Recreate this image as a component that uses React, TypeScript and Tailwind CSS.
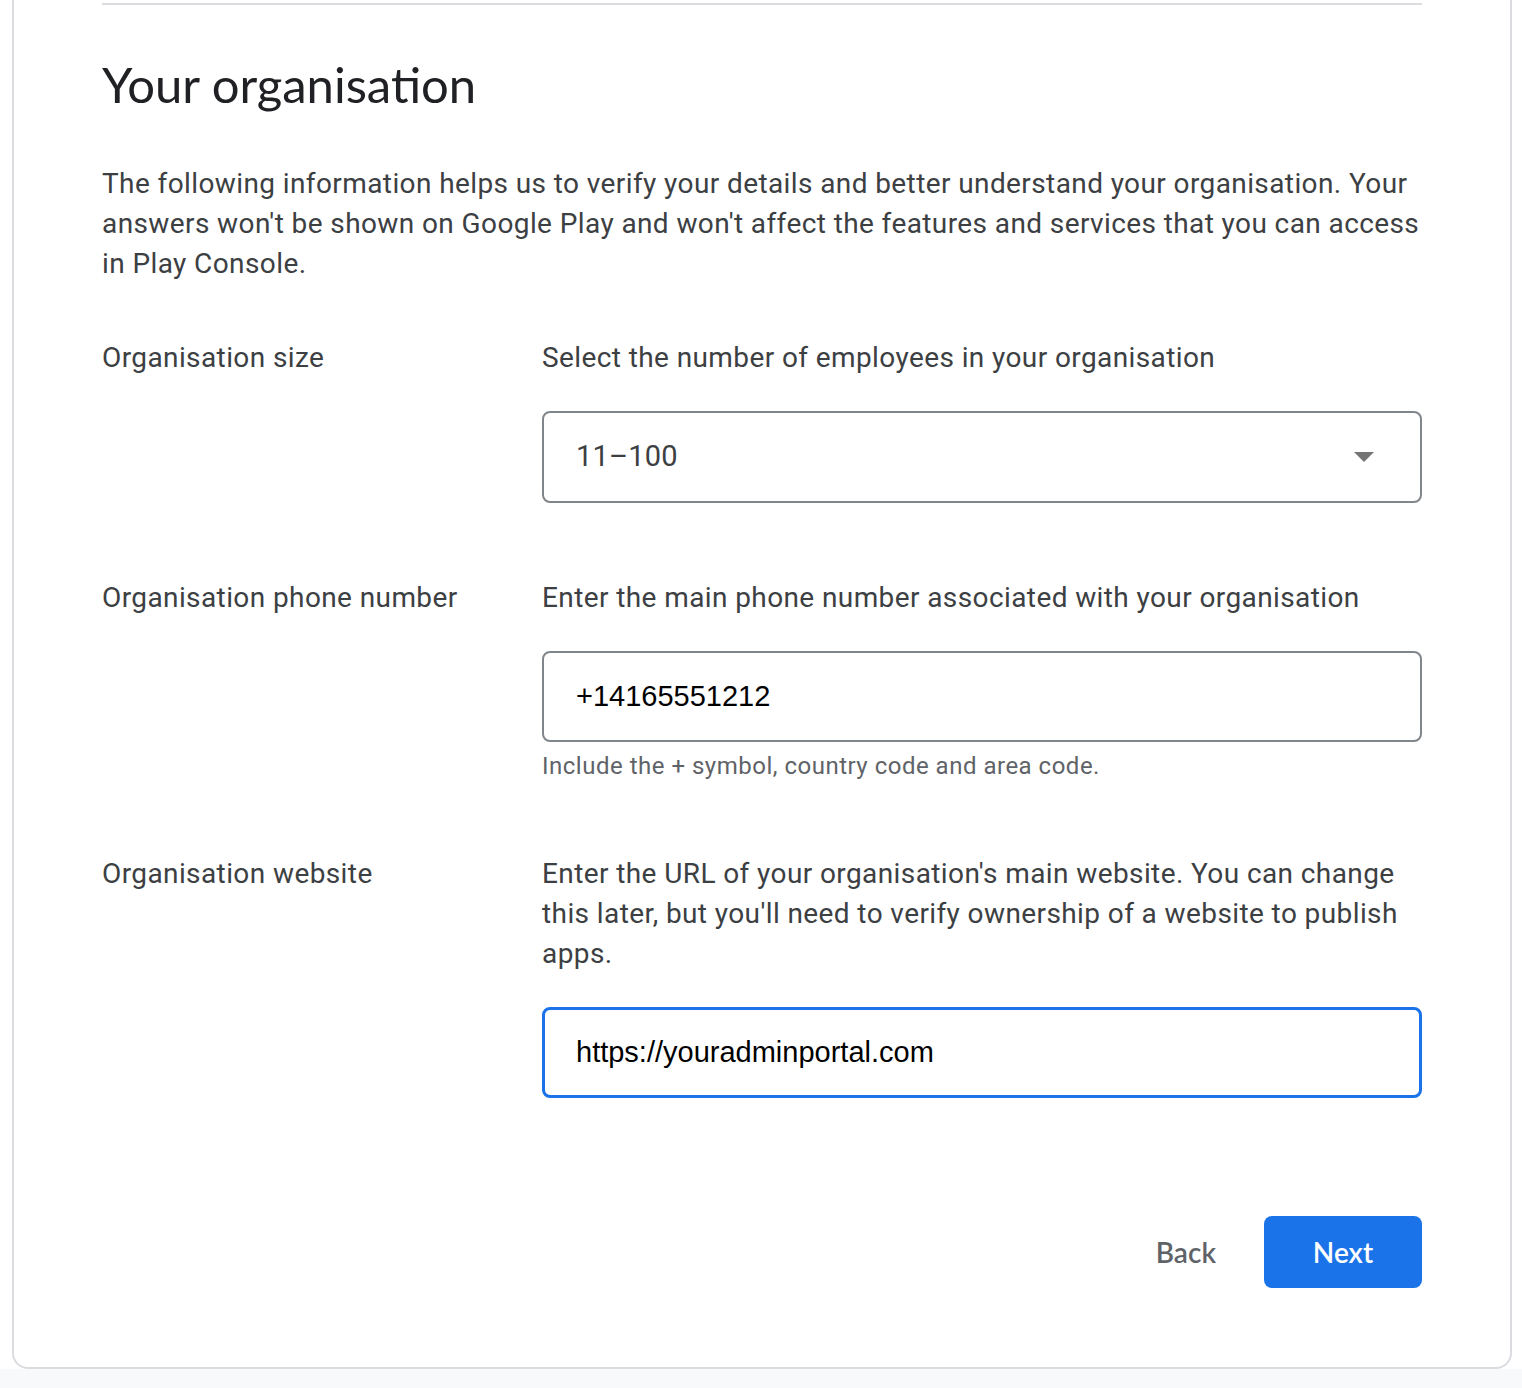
import React from 'react'

const heading = { fontFamily: 'Lato, "Open Sans", sans-serif' }

function Row({ label, children, className = '' }: { label: string; children: React.ReactNode; className?: string }) {
  return (
    <div className={`grid grid-cols-[440px_1fr] ${className}`}>
      <div className="text-[28px] leading-[40px] tracking-[0.4px] text-[#3c4043]">{label}</div>
      <div>{children}</div>
    </div>
  )
}

export default function App() {
  return (
    <div className="min-h-screen bg-white" style={{ fontFamily: 'Roboto, "Liberation Sans", sans-serif' }}>
      <div className="ml-[12px] mr-[10px] border-x-2 border-b-2 border-[#dadce0] rounded-b-[16px] bg-white px-[88px] pt-[3px] pb-[79px]">
        {/* divider from the section above */}
        <div className="h-[2px] bg-[#dadce0]" />

        <h1 className="mt-[51px] text-[49px] leading-[56px] text-[#202124]" style={heading}>
          Your organisation
        </h1>

        <p className="mt-[52px] text-[28px] leading-[40px] tracking-[0.4px] text-[#3c4043]">
          The following information helps us to verify your details and better understand your organisation. Your
          answers won't be shown on Google Play and won't affect the features and services that you can access
          in Play Console.
        </p>

        <Row label="Organisation size" className="mt-[54px]">
          <div className="text-[28px] leading-[40px] tracking-[0.4px] text-[#3c4043]">
            Select the number of employees in your organisation
          </div>
          <div className="mt-[33px] flex h-[92px] items-center justify-between rounded-[8px] border-2 border-[#80868b] pl-[32px] pr-[46px]">
            <span className="text-[29px] tracking-[0.2px] text-[#3c4043]">11–100</span>
            <svg width="20" height="10" viewBox="0 0 20 10">
              <path d="M0 0h20L10 10z" fill="#757575" />
            </svg>
          </div>
        </Row>

        <Row label="Organisation phone number" className="mt-[75px]">
          <div className="text-[28px] leading-[40px] tracking-[0.4px] text-[#3c4043]">
            Enter the main phone number associated with your organisation
          </div>
          <div className="mt-[33px] flex h-[91px] items-center rounded-[8px] border-2 border-[#80868b] pl-[32px]">
            <span className="text-[29px] text-black" style={{ fontFamily: '"Liberation Sans", Arial, sans-serif' }}>
              +14165551212
            </span>
          </div>
          <div className="mt-[8px] text-[24px] leading-[32px] tracking-[0.5px] text-[#5f6368]">
            Include the + symbol, country code and area code.
          </div>
        </Row>

        <Row label="Organisation website" className="mt-[72px]">
          <div className="text-[28px] leading-[40px] tracking-[0.4px] text-[#3c4043]">
            Enter the URL of your organisation's main website. You can change this later, but you'll need to verify
            ownership of a website to publish apps.
          </div>
          <div className="mt-[33px] flex h-[91px] items-center rounded-[8px] border-[3px] border-[#1a73e8] pl-[31px]">
            <span className="text-[29px] text-black" style={{ fontFamily: '"Liberation Sans", Arial, sans-serif' }}>
              https://youradminportal.com
            </span>
          </div>
        </Row>

        <div className="mt-[118px] flex items-center justify-end gap-[24px]">
          <button className="h-[72px] px-[24px] text-[28px] font-semibold text-[#5f6368]" style={heading}>
            Back
          </button>
          <button className="h-[72px] w-[158px] rounded-[8px] bg-[#1a73e8] text-[28px] font-semibold text-white" style={heading}>
            Next
          </button>
        </div>
      </div>
      <div className="h-[20px] bg-[#f8f9fa]" />
    </div>
  )
}
